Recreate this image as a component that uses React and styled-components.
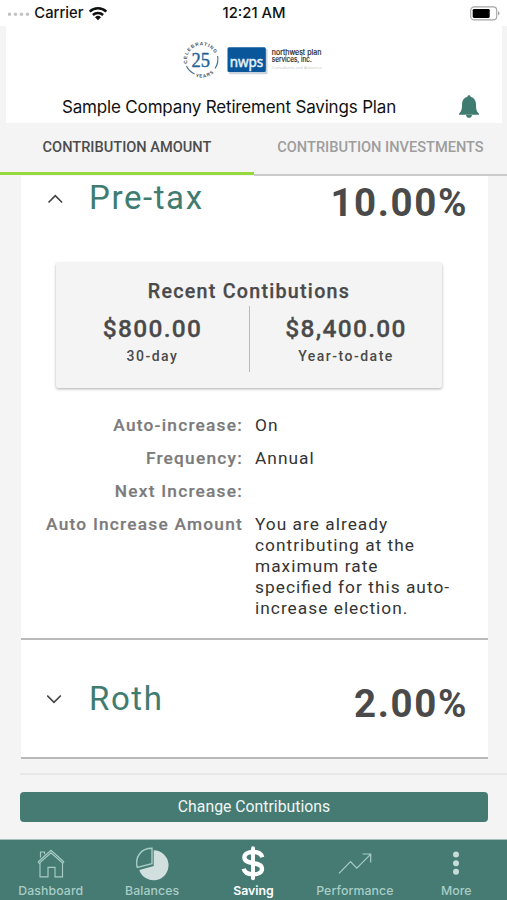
import React from "react";
import styled, { createGlobalStyle } from "styled-components";

const Global = createGlobalStyle`
  * { box-sizing: border-box; }
  body { margin: 0; background: #f4f4f4; font-family: Roboto, sans-serif; }
`;

const Screen = styled.div`
  width: 507px;
  height: 900px;
  display: flex;
  flex-direction: column;
  overflow: hidden;
  background: #f4f4f4;
`;

const StatusBar = styled.div`
  height: 26px;
  flex: none;
  display: grid;
  grid-template-columns: 1fr auto 1fr;
  align-items: center;
  padding: 0 7px 0 8px;
  background: #fff;
  color: #111;
  font: 500 14.8px/26px Inter, sans-serif;
`;

const Carrier = styled.div`
  display: flex;
  align-items: center;
  gap: 4.3px;
`;

const Battery = styled.div`
  display: flex;
  justify-content: flex-end;
`;

const Header = styled.header`
  height: 97px;
  flex: none;
  margin: 0 5px 0 6px;
  background: #fff;
  display: flex;
  flex-direction: column;
`;

const Brand = styled.div`
  height: 66px;
  padding: 12px 0 0 174px;
  svg { overflow: visible; }
`;

const TitleRow = styled.div`
  display: flex;
  align-items: center;
  height: 30px;
  padding: 0 22px 0 56px;
  justify-content: space-between;
`;

const Title = styled.h1`
  margin: 0;
  font: 400 17px/30px Inter, sans-serif;
  letter-spacing: -0.17px;
  color: #111;
  white-space: nowrap;
`;

const Tabs = styled.nav`
  flex: none;
  height: 53px;
  display: grid;
  grid-template-columns: 254px 253px;
  align-items: stretch;
`;

const Tab = styled.div`
  display: flex;
  justify-content: center;
  align-items: flex-end;
  font: 500 14.6px/49px Roboto, sans-serif;
  white-space: nowrap;
  color: ${(p) => (p.$active ? "#4c4c4c" : "#9d9d9d")};
  background: ${(p) =>
    p.$active
      ? "linear-gradient(#97d93c, #97d93c) 0 49px / 100% 3px no-repeat"
      : "linear-gradient(#cacaca, #cacaca) 0 51px / 100% 2px no-repeat"};
  span { height: 53px; }
`;

const Card = styled.section`
  flex: none;
  height: ${(p) => p.$height}px;
  margin: 0 19px 0 21px;
  background: #fff;
  border-bottom: ${(p) => p.$edge}px solid #b9b9b9;
`;

const CardHead = styled.div`
  display: flex;
  align-items: flex-start;
  height: ${(p) => p.$height}px;
  padding: ${(p) => p.$top}px 20px 0 26px;
`;

const Chevron = styled.svg`
  width: 18px;
  height: 12px;
  margin-top: 15px;
  flex: none;
`;

const PlanName = styled.h2`
  margin: 0 0 0 24px;
  flex: 1;
  font: 400 33px/39px Roboto, sans-serif;
  letter-spacing: 1.6px;
  color: #407c70;
`;

const Rate = styled.div`
  font: 700 38.5px/40px Roboto, sans-serif;
  letter-spacing: 1.6px;
  margin-top: 5px;
  color: #4a4a4a;
`;

const Recent = styled.div`
  width: 386px;
  height: 125px;
  margin-left: 35px;
  padding-top: 15px;
  background: #f4f4f4;
  border-radius: 2px;
  box-shadow: 0 1px 3px rgba(0, 0, 0, 0.32);
  color: #4a4a4a;
  text-align: center;
`;

const RecentTitle = styled.div`
  font: 500 19.7px/28px Roboto, sans-serif;
  letter-spacing: 1.25px;
  -webkit-text-stroke: 0.25px currentColor;
`;

const RecentColumns = styled.div`
  display: grid;
  grid-template-columns: 193px 193px;
  height: 66px;
`;

const Amount = styled.div`
  border-left: ${(p) => (p.$divided ? "1px solid #b9b9b9" : "0")};
  strong {
    display: block;
    padding-top: 7px;
    font: 500 24.5px/32px Roboto, sans-serif;
    letter-spacing: 1.3px;
    -webkit-text-stroke: 0.3px currentColor;
  }
  span {
    display: block;
    font: 500 14px/22px Roboto, sans-serif;
    letter-spacing: 1.5px;
  }
`;

const Details = styled.dl`
  margin: 27px 0 0;
  display: grid;
  grid-template-columns: 222px 204px;
  column-gap: 12px;
  row-gap: 12px;
  font: 400 17.3px/21px Roboto, sans-serif;
  letter-spacing: 1.03px;
  font-feature-settings: "liga" 1;
  color: #343434;
  dt {
    text-align: right;
    font-weight: 500;
    letter-spacing: 1.23px;
    color: #7b7b7b;
    white-space: nowrap;
    -webkit-text-stroke: 0.2px currentColor;
  }
  dd { margin: 0; }
`;

const Actions = styled.div`
  flex: none;
  height: 66px;
  margin: 14px 0 0 20px;
  padding: 17px 19px 0 0;
  border-top: 2px solid #e8e8e8;
`;

const Button = styled.button`
  display: block;
  width: 468px;
  height: 30px;
  padding: 0;
  border: 0;
  border-radius: 4px;
  background: #457b73;
  color: #f1f6f5;
  font: 400 15.8px/30px Roboto, sans-serif;
`;

const TabBar = styled.nav`
  flex: none;
  height: 61px;
  display: grid;
  grid-template-columns: repeat(5, 1fr);
  background: #457b73;
  border-top: 1px solid #a9bdbb;
`;

const NavItem = styled.div`
  display: flex;
  flex-direction: column;
  align-items: center;
  color: ${(p) => (p.$active ? "#fff" : "#a9cdc6")};
  font: ${(p) => (p.$active ? 600 : 500)} 12.3px/16px Inter, sans-serif;
  letter-spacing: ${(p) => (p.$active ? "0" : "0.1px")};
  svg { width: 40px; height: 36px; margin: 5px 0 2px; display: block; }
`;

const Signal = () => (
  <svg width="22" height="6" viewBox="0 0 22 6" fill="#c2c2c2">
    {[2, 8, 14, 20].map((x) => <circle key={x} cx={x - 0.5} cy="4.300" r="1.7" />)}
  </svg>
);

const Wifi = () => (
  <svg width="20" height="15" viewBox="0 0 20 15" fill="none" stroke="#111" strokeWidth="2.6">
    <path d="M1.7 5.6a12 12 0 0 1 16.6 0M4.9 9a7.4 7.4 0 0 1 10.2 0" />
    <path d="M10 14.3L7 11.3a4.3 4.3 0 0 1 6 0z" fill="#111" stroke="none" />
  </svg>
);

const BatteryIcon = () => (
  <svg width="30" height="15" viewBox="0 0 30 15">
    <rect x="0.7" y="0.9" width="26" height="13" rx="3.5" fill="none" stroke="#a4a4a4" strokeWidth="1.1" />
    <rect x="2.7" y="2.9" width="17" height="9" rx="1.4" fill="#000" />
    <path d="M28.3 5.2v4.2c1.5-.6 1.5-3.6 0-4.2z" fill="#777" />
  </svg>
);

const Logo = () => (
  <svg width="146" height="42" viewBox="180 38 146 42">
    <defs>
      <path id="topArc" d="M187.500 63.500A14.400 14.400 0 0 1 215.500 56" />
      <path id="bottomArc" d="M195.500 76.600A17.800 17.800 0 0 0 214.500 71.900" />
    </defs>
    <g fill="#454c53" fontFamily="Liberation Sans, sans-serif" fontWeight="700" fontSize="4.700">
      <text letterSpacing=".9"><textPath href="#topArc">CELEBRATING</textPath></text>
      <text letterSpacing=".8"><textPath href="#bottomArc">YEARS</textPath></text>
    </g>
    <path d="M186.500 66A16.500 16.500 0 0 0 194.500 74M217.600 56A16.500 16.500 0 0 1 215 68.500" fill="none" stroke="#426f91" strokeWidth="1.100" />
    <text x="191.500" y="66.800" textLength="18.500" lengthAdjust="spacingAndGlyphs" fill="#216298" stroke="#216298" strokeWidth=".4" fontFamily="Liberation Serif, serif" fontSize="21">25</text>
    <rect x="229" y="48.800" width="38.500" height="25.500" rx="1.500" fill="#cad3dc" />
    <rect x="227.500" y="47.300" width="38.300" height="24.700" rx="1.500" fill="#09569b" />
    <text x="229.800" y="66.800" textLength="33.500" lengthAdjust="spacingAndGlyphs" fill="#e6f4fb" stroke="#e6f4fb" strokeWidth=".5" fontFamily="Noto Sans, sans-serif" fontSize="15">nwps</text>
    <g fill="#272727" stroke="#272727" strokeWidth=".2" fontFamily="Inter, sans-serif" fontSize="7.600">
      <text x="271.800" y="54.800" textLength="49.500" lengthAdjust="spacingAndGlyphs">northwest plan</text>
      <text x="271.800" y="62.300" textLength="40" lengthAdjust="spacingAndGlyphs">services, inc.</text>
    </g>
    <text x="272" y="69.200" textLength="49.500" lengthAdjust="spacingAndGlyphs" fill="#c4c4c4" fontFamily="Open Sans, sans-serif" fontSize="4">Consultants and Actuaries</text>
  </svg>
);

const Bell = () => (
  <svg width="22" height="26" viewBox="0 0 22 26" fill="#407b71">
    <path d="M11 1.2c-1 0-1.6.7-1.6 1.6C5.8 3.7 4 6.600 4 10.300c0 5.200-.6 7-3 9.500v1h20v-1c-2.400-2.500-3-4.300-3-9.500 0-3.700-1.800-6.600-5.400-7.500 0-.9-.6-1.600-1.600-1.600z" />
    <path d="M8 21h6c-.2 1.900-1.300 2.800-3 2.800S8.200 22.900 8 21z" />
  </svg>
);

const House = () => (
  <svg viewBox="0 0 40 36" fill="none" stroke="#a9cdc6" strokeWidth="1.150">
    <path d="M7 17L20 5.300 33 17M7 17l1.300 1.300L20 7.800l11.700 10.500L33 17M9.500 12.500V7h4v2.300M9 17.500v14.300h8V22.300h7v9.500h7.500V17.500" />
  </svg>
);

const Pie = () => (
  <svg viewBox="0 0 40 36">
    <path d="M21.700 5.300A15 15 0 1 1 7.300 25l14.400-4z" fill="#d1e0df" />
    <path d="M20 3.300v15.500L5.300 22.500C2.500 12 9 3.300 20 3.300z" fill="#457b73" stroke="#a9cdc6" strokeWidth="1.400" />
  </svg>
);

const Dollar = () => (
  <svg viewBox="0 0 40 36" fill="none" stroke="#fff">
    <path d="M29.200 12.200C28.200 8.500 24.800 7 20 7c-5 0-8.600 2-8.600 5.500 0 8.200 17.600 3.100 17.600 11.400 0 3.500-3.800 5.400-9 5.400-5.300 0-8.500-1.900-9.300-5.500" strokeWidth="4.300" />
    <path d="M20 3.300v30" strokeWidth="4" strokeLinecap="round" />
  </svg>
);

const Trend = () => (
  <svg viewBox="0 0 40 36" fill="none" stroke="#a9cdc6" strokeWidth="1.200">
    <path d="M4 28.300L15.500 16.500l6.300 6.700L35.500 9.300M27.500 9h8.200v8.600" />
  </svg>
);

const Dots = () => (
  <svg viewBox="0 0 40 36" fill="#c7dcd9">
    {[9.6, 18.2, 26.8].map((y) => <circle key={y} cx="20" cy={y} r="3" />)}
  </svg>
);

const navItems = [
  ["Dashboard", House],
  ["Balances", Pie],
  ["Saving", Dollar],
  ["Performance", Trend],
  ["More", Dots],
];

export default function App() {
  return (
    <Screen>
      <Global />
      <StatusBar>
        <Carrier><Signal />Carrier<Wifi /></Carrier>
        <span>12:21 AM</span>
        <Battery><BatteryIcon /></Battery>
      </StatusBar>
      <Header>
        <Brand><Logo /></Brand>
        <TitleRow>
          <Title>Sample Company Retirement Savings Plan</Title>
          <Bell />
        </TitleRow>
      </Header>
      <Tabs>
        <Tab $active><span>CONTRIBUTION AMOUNT</span></Tab>
        <Tab><span>CONTRIBUTION INVESTMENTS</span></Tab>
      </Tabs>
      <Card $height={464} $edge={2}>
        <CardHead $height={87} $top={2}>
          <Chevron viewBox="0 0 18 12" fill="none" stroke="#444" strokeWidth="1.700"><path d="M1.500 9.500l6.800-6.800 6.800 6.800" /></Chevron>
          <PlanName>Pre-tax</PlanName>
          <Rate>10.00%</Rate>
        </CardHead>
        <Recent>
          <RecentTitle>Recent Contibutions</RecentTitle>
          <RecentColumns>
            <Amount><strong>$800.00</strong><span>30-day</span></Amount>
            <Amount $divided><strong>$8,400.00</strong><span>Year-to-date</span></Amount>
          </RecentColumns>
        </Recent>
        <Details>
          <dt>Auto-increase:</dt><dd>On</dd>
          <dt>Frequency:</dt><dd>Annual</dd>
          <dt>Next Increase:</dt><dd />
          <dt>Auto Increase Amount</dt>
          <dd>You are already contributing at the maximum rate specified for this auto-increase election.</dd>
        </Details>
      </Card>
      <Card $height={119} $edge={2}>
        <CardHead $height={117} $top={39}>
          <Chevron viewBox="0 0 18 12" fill="none" stroke="#444" strokeWidth="1.700"><path d="M.2 1.500l6.800 6.800 6.800-6.800" /></Chevron>
          <PlanName>Roth</PlanName>
          <Rate>2.00%</Rate>
        </CardHead>
      </Card>
      <Actions><Button>Change Contributions</Button></Actions>
      <TabBar>
        {navItems.map(([label, Icon]) => (
          <NavItem key={label} $active={label === "Saving"}><Icon />{label}</NavItem>
        ))}
      </TabBar>
    </Screen>
  );
}
